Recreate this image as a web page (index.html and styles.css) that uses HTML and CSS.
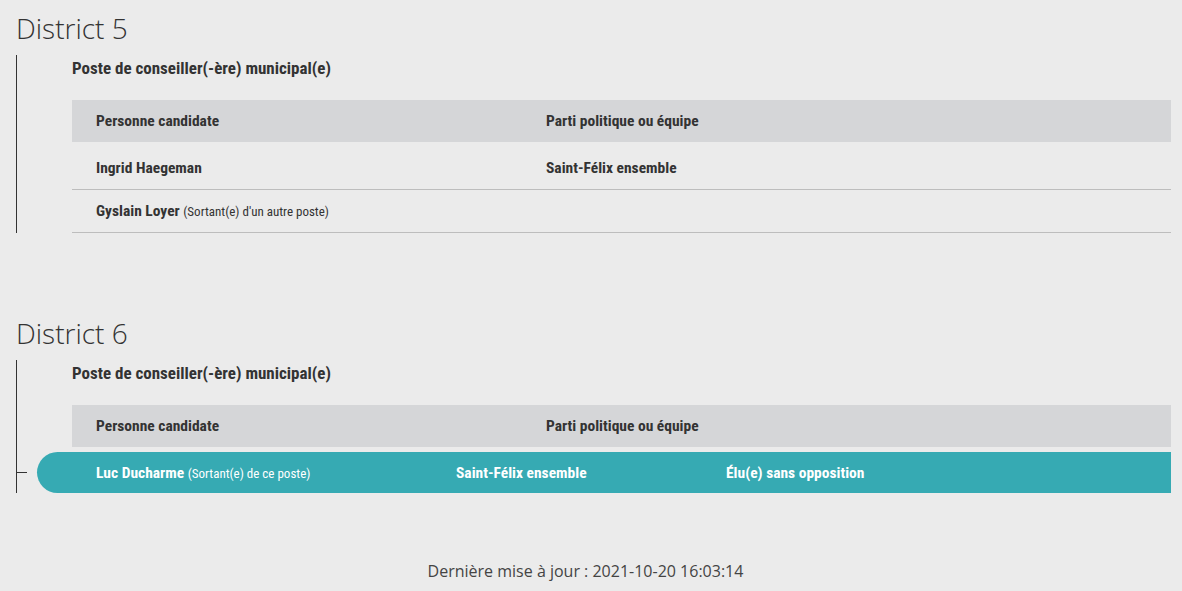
FILE: index.html
```html
<!DOCTYPE html>
<html lang="fr">
<head>
<meta charset="utf-8">
<title>Résultats</title>
<link rel="stylesheet" href="styles.css">
</head>
<body>
<main class="page">
  <section class="district">
    <h2 class="district-title">District 5</h2>
    <div class="poste">
      <h3 class="poste-title">Poste de conseiller(-ère) municipal(e)</h3>
      <div class="table">
        <div class="row head">
          <div class="cell c-name">Personne candidate</div>
          <div class="cell">Parti politique ou équipe</div>
        </div>
        <div class="body">
          <div class="row line">
            <div class="cell c-name">Ingrid Haegeman</div>
            <div class="cell">Saint-Félix ensemble</div>
          </div>
          <div class="row line">
            <div class="cell c-name">Gyslain Loyer <span class="note">(Sortant(e) d'un autre poste)</span></div>
            <div class="cell"></div>
          </div>
        </div>
      </div>
    </div>
  </section>

  <section class="district second">
    <h2 class="district-title">District 6</h2>
    <div class="poste">
      <h3 class="poste-title">Poste de conseiller(-ère) municipal(e)</h3>
      <div class="table">
        <div class="row head">
          <div class="cell c-name">Personne candidate</div>
          <div class="cell">Parti politique ou équipe</div>
        </div>
        <div class="body">
          <div class="row elected">
            <div class="cell e-name">Luc Ducharme <span class="note">(Sortant(e) de ce poste)</span></div>
            <div class="cell e-party">Saint-Félix ensemble</div>
            <div class="cell">Élu(e) sans opposition</div>
          </div>
        </div>
      </div>
    </div>
  </section>

  <footer class="footer">Dernière mise à jour : 2021-10-20 16:03:14</footer>
</main>
</body>
</html>
```
FILE: styles.css
```css
html, body {
  margin: 0;
  padding: 0;
  background: #ebebeb;
}
body {
  font-family: "Open Sans", "Liberation Sans", sans-serif;
  color: #333;
}
.page {
  padding: 9px 11px 0 16px;
}
.district-title {
  margin: 0 0 8px 0;
  font-family: "Open Sans", sans-serif;
  font-weight: 350;
  font-size: 28px;
  line-height: 38px;
  color: #333;
}
.district.second {
  margin-top: 81px;
}
.poste {
  border-left: 1px solid #333;
  padding: 3px 0 0 55px;
}
.poste-title {
  margin: 0 0 22px 0;
  font-family: "Roboto Condensed", "Roboto", sans-serif;
  font-stretch: 75%;
  font-weight: 700;
  font-size: 17px;
  line-height: 20px;
  color: #333;
}
.table {
  font-family: "Roboto Condensed", "Roboto", sans-serif;
  font-stretch: 75%;
  font-weight: 700;
  font-size: 15.5px;
  color: #333;
}
.row {
  display: flex;
  align-items: center;
  height: 42px;
  padding-left: 24px;
}
.row.head {
  background: #d5d6d8;
}
.body {
  padding-top: 5px;
}
.row.line {
  border-bottom: 1px solid #bdbdbd;
}
.c-name {
  width: 450px;
}
.note {
  font-weight: 400;
  font-size: 13px;
}
.row.elected {
  position: relative;
  height: 41px;
  margin-left: -35px;
  padding-left: 59px;
  background: #36aab3;
  color: #fff;
  border-radius: 21px 0 0 21px;
}
.row.elected::before {
  content: "";
  position: absolute;
  left: -21px;
  top: 20px;
  width: 11px;
  height: 1px;
  background: #333;
}
.e-name {
  width: 360px;
}
.e-party {
  width: 270px;
}
.footer {
  margin-top: 67px;
  padding-right: 16px;
  text-align: center;
  font-family: "Open Sans", sans-serif;
  font-size: 16px;
  line-height: 22px;
  color: #444;
}
```
